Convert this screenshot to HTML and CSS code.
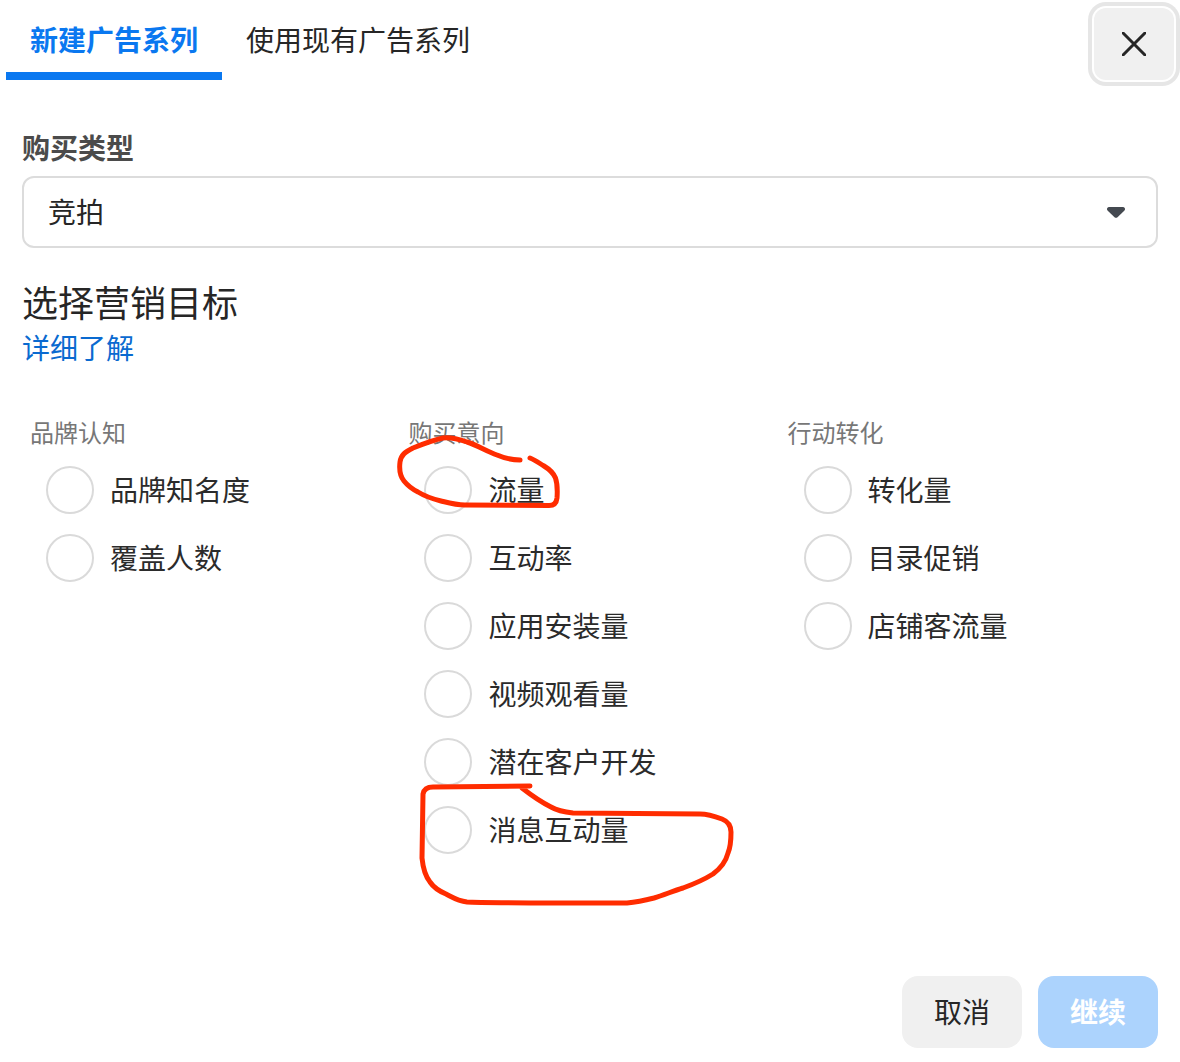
FILE: index.html
```html
<!DOCTYPE html>
<html lang="zh-CN">
<head>
<meta charset="utf-8">
<title>新建广告系列</title>
<link rel="stylesheet" href="styles.css">
</head>
<body>
<div class="page">
  <header class="topbar">
    <nav class="tabs">
      <a class="tab tab-active">新建广告系列</a>
      <a class="tab">使用现有广告系列</a>
    </nav>
    <button class="close" aria-label="关闭">
      <svg class="close-icon" viewBox="0 0 24 24" width="24" height="24"><path d="M1 1 L23 23 M23 1 L1 23"/></svg>
    </button>
  </header>
  <main class="form">
    <div class="field-label">购买类型</div>
    <div class="select">
      <span>竞拍</span>
      <svg class="caret" viewBox="0 0 18 11" width="18" height="11"><path d="M2 0 H16 C17.4 0 18 1 18 2 C18 3 17.5 3.5 17 4 L10.5 10.2 C9.6 11 8.4 11 7.5 10.2 L1 4 C0.5 3.5 0 3 0 2 C0 1 0.6 0 2 0 Z"/></svg>
    </div>
    <h2 class="title">选择营销目标</h2>
    <a class="more">详细了解</a>
    <div class="columns">
      <section class="group">
        <div class="group-label">品牌认知</div>
        <label class="option"><span class="radio"></span>品牌知名度</label>
        <label class="option"><span class="radio"></span>覆盖人数</label>
      </section>
      <section class="group">
        <div class="group-label">购买意向</div>
        <label class="option"><span class="radio"></span>流量</label>
        <label class="option"><span class="radio"></span>互动率</label>
        <label class="option"><span class="radio"></span>应用安装量</label>
        <label class="option"><span class="radio"></span>视频观看量</label>
        <label class="option"><span class="radio"></span>潜在客户开发</label>
        <label class="option"><span class="radio"></span>消息互动量</label>
      </section>
      <section class="group">
        <div class="group-label">行动转化</div>
        <label class="option"><span class="radio"></span>转化量</label>
        <label class="option"><span class="radio"></span>目录促销</label>
        <label class="option"><span class="radio"></span>店铺客流量</label>
      </section>
    </div>
    <footer class="actions">
      <button class="btn btn-cancel">取消</button>
      <button class="btn btn-primary">继续</button>
    </footer>
  </main>
  <svg class="marks" viewBox="0 0 1180 1062" width="1180" height="1062" aria-hidden="true">
    <path d="M520 460 C511 460 504 458 497 455 C486 451 477 445 467 442 C458 439 450 437 443 438 C433 440 423 444 413 448 C405 452 401 455 400 462 C399 470 400 476 404 481 C408 486 412 489 418 492 C426 497 433 499 441 501 C449 503 456 505 465 505 L549 505.5 C554 505.5 556.5 503 557 498 C557.5 491 557.5 484 555.5 478 C553 472 549 469 544 466 C539 463 535 460 530 458"/>
    <path d="M530 786 L433 787 C427 787 424 789 423 794 L422 858 C423 868 426 877 430 882 C434 888 439 891 446 894 C452 897 458 901 467 902 C481 903 600 903 627 903 C637 902 646 900 654 898 C664 895 673 891 683 888 C694 884 705 879 713 874 C721 868 726 861 728 853 C731 846 731 839 731 832 C731 825 727 821 722 819 C714 816 707 814 700 814 L573 813 C564 812 558 811 551 807 C541 802 531 795 522 788"/>
  </svg>
</div>
</body>
</html>
```
FILE: styles.css
```css
* { box-sizing: border-box; }
html, body { margin: 0; padding: 0; background: #fff; }
body {
  font-family: "Noto Sans CJK SC", "Noto Sans", sans-serif;
  color: #262626;
  font-size: 28px;
}
.page { position: relative; width: 1180px; height: 1062px; overflow: hidden; }
.topbar { display: flex; justify-content: space-between; align-items: flex-start; height: 80px; padding: 0 6px; }
.tabs { display: flex; }
.tab { display: block; height: 80px; line-height: 78px; padding: 0 24px; font-size: 28px; }
.tab-active { color: #0a78f0; font-weight: 700; border-bottom: 8px solid #0a78f0; }
.close {
  width: 80px; height: 72px; margin-top: 8px; padding: 0;
  display: flex; align-items: center; justify-content: center;
  background: #f0f0f0; border: 0; border-radius: 12px;
  box-shadow: 0 0 0 2px #fff, 0 0 0 6px #e6e6e6;
}
.close-icon { fill: none; stroke: #262626; stroke-width: 3; stroke-linecap: round; }
.form { padding: 0 22px; }
.field-label { margin-top: 50px; height: 36px; line-height: 34px; font-weight: 700; color: #4b4b4b; }
.select {
  display: flex; align-items: center; justify-content: space-between;
  height: 72px; margin-top: 10px; padding: 0 31px 0 24px;
  border: 2px solid #dcdcdc; border-radius: 12px;
}
.select span { line-height: 66px; height: 68px; }
.caret { fill: #444950; }
.title { margin: 30px 0 0; height: 50px; font-size: 36px; font-weight: 400; line-height: 46px; color: #262626; }
.more { display: block; height: 40px; line-height: 38px; color: #0a6ad0; }
.columns { display: grid; grid-template-columns: 378.4px 379.2px 1fr; margin-top: 49px; height: 437px; }
.group { display: flex; flex-direction: column; gap: 20px; padding-left: 8px; }
.group-label { height: 32px; line-height: 30px; font-size: 24px; color: #777; margin-bottom: -3px; }
.option { display: flex; align-items: flex-start; gap: 16px; height: 48px; padding-left: 16px; line-height: 46px; color: #2b2b2b; }
.radio { flex: none; width: 48px; height: 48px; border: 2px solid #dadada; border-radius: 50%; background: #fff; }
.actions { display: flex; justify-content: flex-end; gap: 16px; margin-top: 122px; }
.btn { width: 120px; height: 72px; border: 0; border-radius: 16px; font: inherit; padding: 0 0 2px; }
.btn-cancel { background: #f0f0f0; color: #262626; }
.btn-primary { background: #acd3fd; color: #fff; font-weight: 700; }
.marks { position: absolute; left: 0; top: 0; pointer-events: none; fill: none; stroke: #ff2c00; stroke-width: 5; stroke-linecap: round; stroke-linejoin: round; }
```
